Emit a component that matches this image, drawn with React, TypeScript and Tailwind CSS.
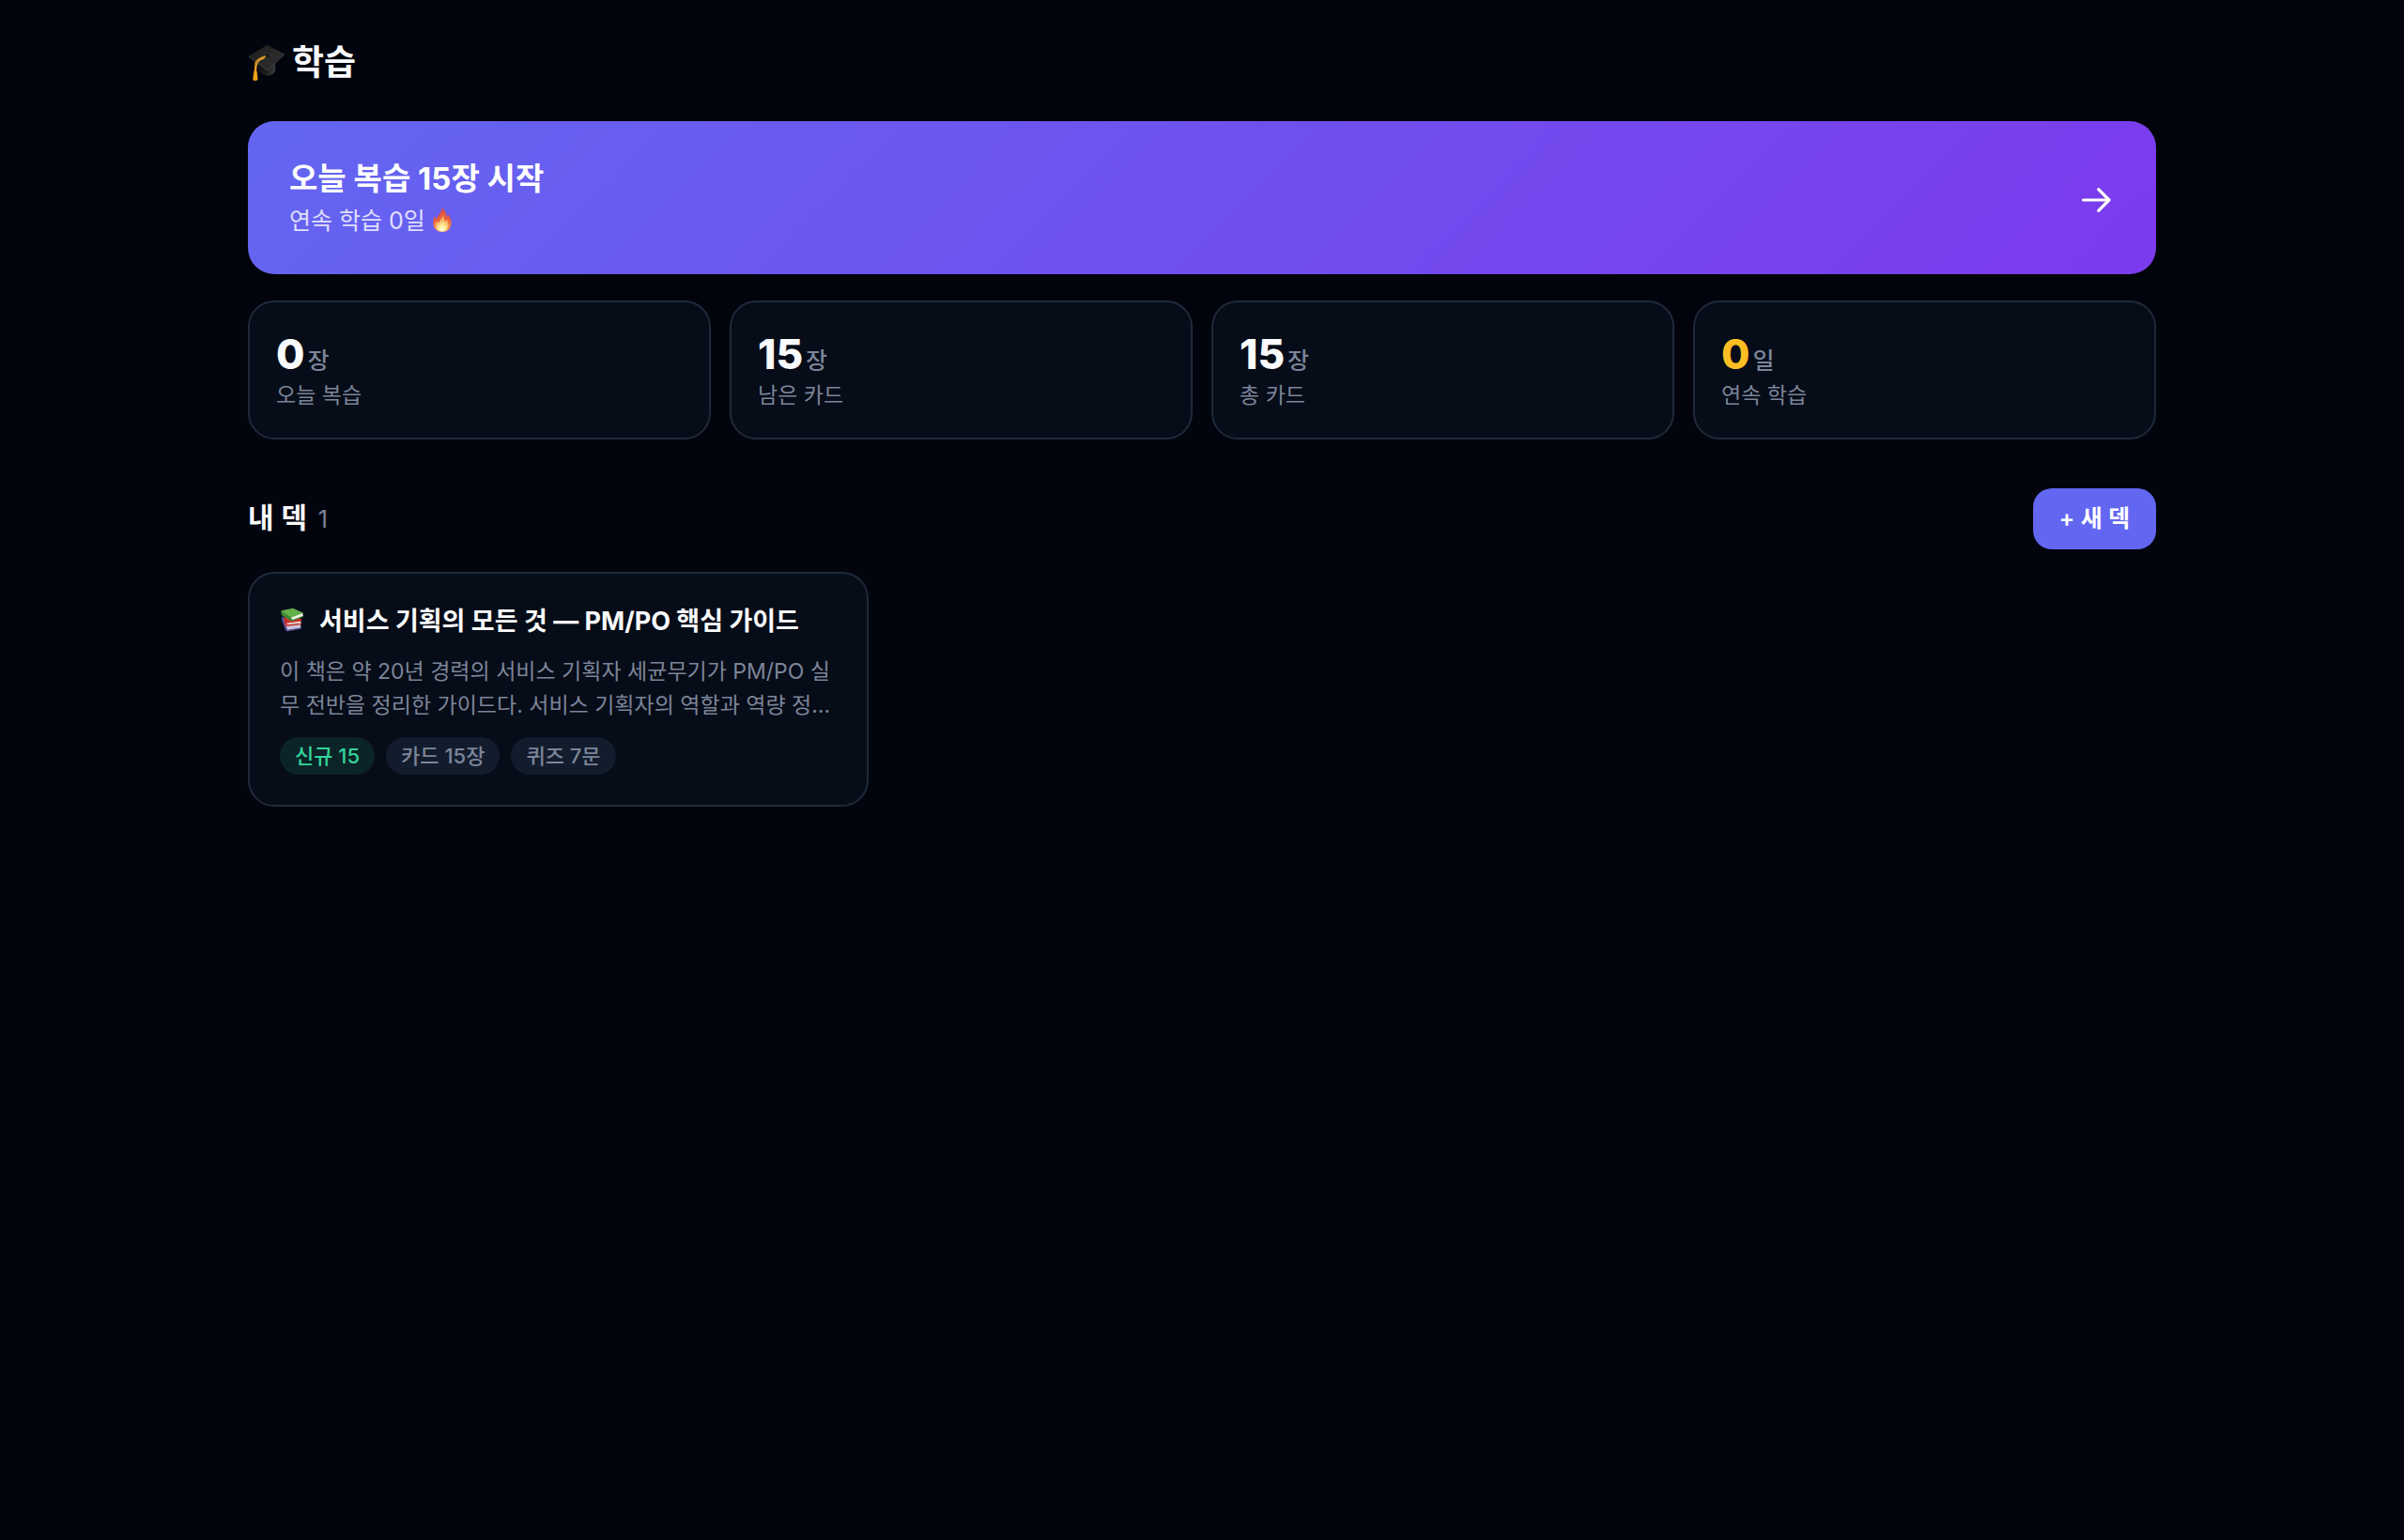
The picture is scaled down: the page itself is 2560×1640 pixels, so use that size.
import React from "react";

function GraduationCap() {
  return (
    <svg viewBox="0 0 40 40" className="h-10 w-10 shrink-0" aria-hidden="true">
      <defs>
        <linearGradient id="capTop" x1="0" y1="0" x2="1" y2="1">
          <stop offset="0" stopColor="#1a1a1a" />
          <stop offset="0.6" stopColor="#2b2b2b" />
          <stop offset="1" stopColor="#262626" />
        </linearGradient>
        <linearGradient id="capBase" x1="0" y1="0" x2="1" y2="0.4">
          <stop offset="0" stopColor="#0d0d0d" />
          <stop offset="0.7" stopColor="#1c1c1c" />
          <stop offset="1" stopColor="#3a3b3d" />
        </linearGradient>
      </defs>
      <path d="M10 20 L10 25.500 C12 30 16 33.500 20.500 33.500 C25.500 33 29 30.500 29.300 27 L29 19 Z" fill="url(#capBase)" />
      <path d="M1 12.500 L20.500 1 L39 10.500 L20.500 27.500 Z" fill="url(#capTop)" />
      <path d="M1 12.500 L20.500 27.500 L39 10.500 L39 11.500 L20.500 28.500 L1 13.400 Z" fill="#444444" />
      <ellipse cx="20" cy="12.200" rx="3.400" ry="2.500" fill="#161616" stroke="#3f3f3f" strokeWidth="0.600" />
      <path d="M18.500 13 C14 14.500 9.500 16.800 8.300 19.500 C7.600 22 7.700 25 7.600 29" fill="none" stroke="#e59a17" strokeWidth="1.500" strokeLinecap="round" />
      <path d="M17.500 15 C14 16 10.500 18.500 9.600 21 C8.900 23 8.600 26 8.400 29" fill="none" stroke="#f2b23a" strokeWidth="1.200" strokeLinecap="round" />
      <path d="M6.300 28.500 L9.700 28.500 C9.600 31.500 10.600 35 10.400 38 C9 39.400 6.500 39.400 5.300 38 C5.300 34.500 6.300 31.500 6.300 28.500 Z" fill="#e8960c" />
      <path d="M7.500 30 L7.200 38 M8.800 30 L9 38" stroke="#f9b93c" strokeWidth="0.600" />
    </svg>
  );
}

function Flame() {
  return (
    <svg viewBox="0 0 20 26" className="mb-1 h-[26px] w-5 shrink-0" aria-hidden="true">
      <defs>
        <linearGradient id="flameOuter" x1="0" y1="0" x2="0" y2="1">
          <stop offset="0" stopColor="#d84a4a" />
          <stop offset="0.5" stopColor="#e9603a" />
          <stop offset="1" stopColor="#f4a860" />
        </linearGradient>
        <radialGradient id="flameInner" cx="0.5" cy="0.9" r="0.8">
          <stop offset="0" stopColor="#ffffe6" />
          <stop offset="0.35" stopColor="#ffe995" />
          <stop offset="1" stopColor="#f4893f" />
        </radialGradient>
      </defs>
      <path
        d="M9.500 0 C12.500 2.800 14.800 6.500 14.600 10.500 C15.500 9.800 15.900 8.500 15.700 7 C18.300 9.500 20 13.500 19.600 17.500 C19 22.800 15.300 26 10.200 26 C4.800 26 0.800 22.800 0.400 17.500 C0.200 14 1 10.500 2.300 8.500 C2.500 10.500 3 11.800 4 12.600 C5 8 9.800 5.500 9.500 0 Z"
        fill="url(#flameOuter)"
      />
      <path
        d="M10.400 7 C12.600 10 11.700 12.500 12.800 15 C13.800 14.600 14.300 13.500 14.400 12.300 C16.300 14.500 17 17.500 16.300 20.300 C15.300 24 12.900 25.500 10 25.500 C6.600 25.500 3.900 23.600 3.300 20.200 C3 18 3.300 16 4.300 14.600 C5 16 5.600 16.500 6.500 16.600 C6.600 13 10.600 11.500 10.400 7 Z"
        fill="url(#flameInner)"
      />
    </svg>
  );
}

function Books() {
  return (
    <svg viewBox="0 0 28 28" className="mb-1 h-7 w-7 shrink-0" aria-hidden="true">
      <path d="M4.500 19 L7 25.500 L22.500 22.500 L22 19 Z" fill="#c9c6dc" />
      <path d="M4.500 18.500 C4.200 20.500 5.500 24.500 7.500 26.500 L22.800 23.800 L22.800 22.600 L8.200 24.800 L7.200 21.800 Z" fill="#59539b" />
      <path d="M4 13 L7 20 L22.800 18.200 L22 13.500 Z" fill="#e6cfcc" />
      <path d="M3.500 12 L20 10.500 L22.800 15 L7 17.800 Z" fill="#d83a32" />
      <path d="M3.500 11.500 C3 14.500 4.500 19 6.800 21 L23 19 L23 17.800 L7.800 19.200 L7 17.200 L22.800 15.500 L22.800 13 Z" fill="#c92c2b" />
      <path d="M2.200 10.500 C1.600 13 2.400 17 4.400 20 L5.200 19.500 L3.600 11 Z" fill="#3d55a5" />
      <path d="M2 5.500 L11.500 11 L13 15 L24.800 10 L24.300 6.800 Z" fill="#f1f1e6" />
      <path d="M1.500 4.200 L14 1.800 L25.200 6.800 L12 11.700 Z" fill="#62b04a" />
      <path d="M1.500 4.200 C1 6 1.500 8.200 2.500 9.400 L12.600 15.800 L25 11 L24.800 10 L13.200 14 L12 11.500 Z" fill="#3f8a33" />
    </svg>
  );
}

function ArrowRight() {
  return (
    <svg viewBox="0 0 32 26" className="mt-1 h-[26px] w-8 shrink-0" fill="none" stroke="white" strokeWidth="3.200" strokeLinecap="round" strokeLinejoin="round" aria-hidden="true">
      <path d="M2.500 13 H30 M18.700 1.700 L30 13 L18.700 24.300" />
    </svg>
  );
}

const stats = [
  { value: "0", unit: "장", label: "오늘 복습", tone: "text-gray-50" },
  { value: "15", unit: "장", label: "남은 카드", tone: "text-gray-50" },
  { value: "15", unit: "장", label: "총 카드", tone: "text-gray-50" },
  { value: "0", unit: "일", label: "연속 학습", tone: "text-[#fbbf24]" },
];

const tags = [
  { text: "신규 15", tone: "bg-[#0b2428] text-[#34d399]" },
  { text: "카드 15장", tone: "bg-[#121c2d] text-[#7c8599]" },
  { text: "퀴즈 7문", tone: "bg-[#121c2d] text-[#7c8599]" },
];

export default function App() {
  return (
    <div className="min-h-screen bg-[#02050e] font-['Inter','Noto_Sans_CJK_KR',sans-serif] text-gray-50">
      <main className="mx-auto max-w-[2160px] px-16 pt-[42px] pb-16">
        <h1 className="mb-[38px] flex items-center gap-[7px] text-[37px] leading-[49px] font-bold">
          <GraduationCap />
          학습
        </h1>

        <button
          type="button"
          className="flex w-full items-center justify-between rounded-[28px] bg-linear-[135deg,#6366f1,#7c3aed] py-9 pr-12 pl-11 text-left text-white shadow-[0_8px_40px_rgba(0,0,0,0.5)]"
        >
          <span className="block">
            <span className="block text-[33px] leading-[50px] font-bold">오늘 복습 15장 시작</span>
            <span className="flex items-center gap-2 text-[25px] leading-[41px] text-white/80">
              연속 학습 0일
              <Flame />
            </span>
          </span>
          <ArrowRight />
        </button>

        <section className="mt-7 grid grid-cols-4 gap-5">
          {stats.map((s) => (
            <div key={s.label} className="rounded-[28px] border-2 border-[#20293a] bg-[#060c18] p-7">
              <p className={`flex items-baseline gap-[3px] text-[44px] leading-[55px] font-extrabold ${s.tone}`}>
                {s.value}
                <span className="text-[25px] leading-none font-medium text-[#7c8599]">{s.unit}</span>
              </p>
              <p className="text-[23px] leading-[33px] text-[#7c8599]">{s.label}</p>
            </div>
          ))}
        </section>

        <section className="mt-[52px]">
          <div className="flex items-center justify-between">
            <h2 className="flex items-baseline gap-3 text-[30px] leading-[45px] font-semibold">
              내 덱
              <span className="text-[25px] font-normal text-[#7c8599]">1</span>
            </h2>
            <button type="button" className="rounded-[20px] bg-[#6366f1] px-7 py-3 text-[25px] leading-[41px] font-semibold text-white">
              + 새 덱
            </button>
          </div>

          <div className="mt-6 grid grid-cols-3 gap-6">
            <a href="#deck" className="block rounded-[28px] border-2 border-[#20293a] bg-[#060c18] p-8">
              <h3 className="flex items-center gap-3.5 text-[27px] leading-[38px] font-bold">
                <Books />
                서비스 기획의 모든 것 — PM/PO 핵심 가이드
              </h3>
              <p className="mt-4 text-[23px] leading-9 break-all text-[#7c8599]">
                이 책은 약 20년 경력의 서비스 기획자 세균무기가 PM/PO 실무 전반을 정리한 가이드다. 서비스 기획자의 역할과 역량 정…
              </p>
              <div className="mt-4 flex gap-3">
                {tags.map((t) => (
                  <span key={t.text} className={`rounded-full px-4 text-[22px] leading-10 font-medium ${t.tone}`}>
                    {t.text}
                  </span>
                ))}
              </div>
            </a>
          </div>
        </section>
      </main>
    </div>
  );
}
